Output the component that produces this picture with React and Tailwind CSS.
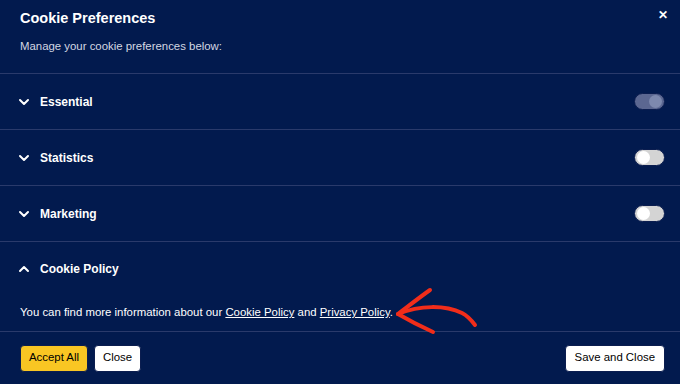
import React, { useState } from 'react';

const Chevron = ({ up }) => (
  <svg width="12" height="12" viewBox="0 0 12 12" className="shrink-0">
    <path
      d={up ? 'M2 8 L6 4 L10 8' : 'M2 4 L6 8 L10 4'}
      fill="none"
      stroke="white"
      strokeWidth="2"
      strokeLinecap="round"
      strokeLinejoin="round"
    />
  </svg>
);

const Toggle = ({ on, disabled }) => {
  if (disabled) {
    return (
      <div className="w-[31px] h-[17px] rounded-full bg-[#5b6791] border border-[#0b1d4f] flex items-center justify-end px-[2px]">
        <div className="w-[13px] h-[13px] rounded-full bg-[#7d89ae]" />
      </div>
    );
  }
  return (
    <div
      className={`w-[31px] h-[17px] rounded-full border border-[#0b1d4f] flex items-center px-[2px] ${
        on ? 'bg-[#f9c623] justify-end' : 'bg-[#d4d4d4] justify-start'
      }`}
    >
      <div className="w-[13px] h-[13px] rounded-full bg-white" />
    </div>
  );
};

const Row = ({ label, toggle }) => (
  <div className="h-14 flex items-center justify-between pl-[18px] pr-[15px] border-b border-[#2a3a6b]">
    <div className="flex items-center gap-[10px]">
      <Chevron />
      <span className="text-[12px] font-bold text-white">{label}</span>
    </div>
    {toggle}
  </div>
);

export default function App() {
  const [stats] = useState(false);
  const [marketing] = useState(false);

  return (
    <div
      className="w-[680px] h-[384px] bg-[#021a4e] text-white overflow-hidden flex flex-col"
      style={{ fontFamily: '"Liberation Sans", Arial, sans-serif' }}
    >
      {/* Header */}
      <div className="h-[74px] relative px-5 pt-[8px] border-b border-[#2a3a6b] shrink-0">
        <h2 className="text-[14.5px] font-bold leading-[20px]">Cookie Preferences</h2>
        <p className="text-[11.4px] text-[#d3d7e2] mt-[10px] leading-[16px]">
          Manage your cookie preferences below:
        </p>
        <button className="absolute right-[12px] top-[9px] text-white text-[12px] font-bold leading-none">
          ✕
        </button>
      </div>

      <Row label="Essential" toggle={<Toggle disabled />} />
      <Row label="Statistics" toggle={<Toggle on={stats} />} />
      <Row label="Marketing" toggle={<Toggle on={marketing} />} />

      {/* Cookie Policy */}
      <div className="h-[90px] border-b border-[#2a3a6b] relative shrink-0">
        <div className="h-[54px] flex items-center gap-[10px] pl-[18px]">
          <Chevron up />
          <span className="text-[12px] font-bold text-white">Cookie Policy</span>
        </div>
        <p className="px-5 mt-[8px] text-[11.4px] leading-[16px] text-white">
          You can find more information about our{' '}
          <a className="underline">Cookie Policy</a> and{' '}
          <a className="underline">Privacy Policy</a>.
        </p>
        <svg
          className="absolute left-[390px] top-[38px]"
          width="95"
          height="58"
          viewBox="0 0 95 58"
        >
          <g fill="none" stroke="#f12d1a" strokeWidth="4" strokeLinecap="round" strokeLinejoin="round">
            <path d="M40 10 C30 17 16 28 8 34" />
            <path d="M8 34 C20 41 32 47 43 52" />
            <path d="M8 34 C30 25 55 25 72 33 C78 36 82 41 85 45" />
          </g>
        </svg>
      </div>

      {/* Footer */}
      <div className="flex-1 flex items-center justify-between px-5">
        <div className="flex items-center gap-[6px]">
          <button className="h-[27px] px-[8px] rounded-[4px] bg-[#f9c623] border border-[#0b1d4f] text-black text-[11.4px]">
            Accept All
          </button>
          <button className="h-[27px] px-[8px] rounded-[4px] bg-white border border-[#0b1d4f] text-black text-[11.4px]">
            Close
          </button>
        </div>
        <button className="h-[27px] px-[9px] rounded-[4px] bg-white border border-[#0b1d4f] text-black text-[11.4px] -mr-[5px]">
          Save and Close
        </button>
      </div>
    </div>
  );
}
